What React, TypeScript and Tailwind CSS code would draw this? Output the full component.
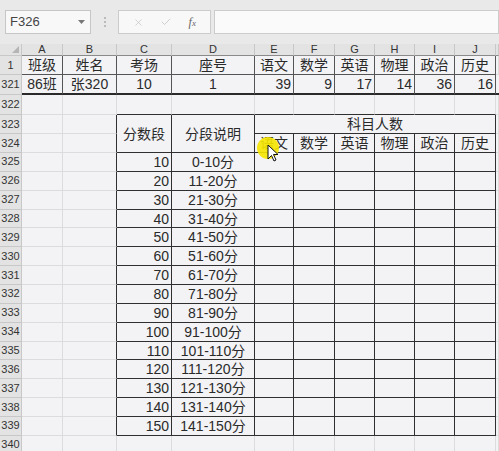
import { X, Check } from 'lucide-react'

const letters = ['A', 'B', 'C', 'D', 'E', 'F', 'G', 'H', 'I', 'J']
const heads = ['班级', '姓名', '考场', '座号', '语文', '数学', '英语', '物理', '政治', '历史']
const subjects = ['语文', '数学', '英语', '物理', '政治', '历史']
const scores = [39, 9, 17, 14, 36, 16]
const bands = Array.from({ length: 15 }, (_, i) => ({
  row: 325 + i,
  score: (i + 1) * 10,
  label: i === 0 ? '0-10分' : `${i * 10 + 1}-${(i + 1) * 10}分`,
}))

const GRID = 'border-r border-b border-[#dcdcdc]'
const TBL = 'border-r border-b border-[#2f2f2f]'
const EDGE = 'border-r border-b border-b-[#dcdcdc] border-r-[#2f2f2f]'
const TOP = 'border-r border-b border-r-[#dcdcdc] border-b-[#2f2f2f]'
const DATA = 'border-r border-b border-[#555]'
const FROZEN = 'border-r border-b-2 border-r-[#555] border-b-[#2a2a2a]'
const HDR = 'bg-[#e3e3e3] border-r border-b border-[#c8c8c8] text-[11px] text-[#333] justify-center'

function Cell({ className = '', children }: { className?: string; children?: React.ReactNode }) {
  return (
    <div className={`flex items-center overflow-hidden whitespace-nowrap ${className}`}>
      {children}
    </div>
  )
}

function RowHead({ n }: { n: number }) {
  return <Cell className={HDR}>{n}</Cell>
}

export default function App() {
  return (
    <div className="relative w-[499px] h-[451px] overflow-hidden bg-[#e9e9e9] text-[#2a2a2a] font-['Liberation_Sans','Noto_Sans_CJK_SC',sans-serif]">
      {/* Formula bar */}
      <div className="h-[44px] pt-[10px] pl-[5px] flex items-start">
        <div className="w-[86px] h-[24px] bg-[#f8f8f8] border border-[#c6c6c6] flex items-center justify-between pl-[4px] pr-[5px] text-[13px] text-[#444]">
          <span>F326</span>
          <svg width="7" height="4" viewBox="0 0 7 4">
            <path d="M0 0 L7 0 L3.5 4 Z" fill="#777" />
          </svg>
        </div>
        <div className="w-[27px] h-[24px] flex flex-col items-center justify-center gap-[2px]">
          <span className="w-[2px] h-[2px] bg-[#bbb]" />
          <span className="w-[2px] h-[2px] bg-[#bbb]" />
          <span className="w-[2px] h-[2px] bg-[#bbb]" />
        </div>
        <div className="w-[93px] h-[24px] bg-[#f8f8f8] border border-[#cccccc] flex items-center justify-around px-[6px]">
          <X size={11} strokeWidth={1.5} color="#c2c2c2" />
          <Check size={12} strokeWidth={1.5} color="#c2c2c2" />
          <span className="italic font-['Liberation_Serif',serif] text-[12px] text-[#666] leading-none">
            f<span className="text-[9px]">x</span>
          </span>
        </div>
        <div className="ml-[3px] flex-1 h-[24px] bg-[#fafafa] border border-[#cccccc]" />
      </div>

      {/* Sheet */}
      <div className="grid grid-cols-[22px_41px_54px_55px_83px_39px_41px_40px_40px_40px_41px_1fr] grid-rows-[12px_19px_20px_20px_19px_19px_repeat(15,18.87px)_19px] bg-[#f3f3f5] text-[14px] leading-none">
        {/* column headers */}
        <Cell className="bg-[#e3e3e3] border-r border-b border-[#c8c8c8] justify-end items-end pr-[2px] pb-[2px]">
          <svg width="7" height="7" viewBox="0 0 7 7">
            <path d="M7 0 L7 7 L0 7 Z" fill="#b5b5b5" />
          </svg>
        </Cell>
        {letters.map((l) => (
          <Cell key={l} className={`${HDR} border-b-[#8a8a8a]`}>
            {l}
          </Cell>
        ))}
        <Cell className={`${HDR} border-b-[#8a8a8a]`} />

        {/* row 1 */}
        <RowHead n={1} />
        {heads.map((h) => (
          <Cell key={h} className={`${DATA} justify-center`}>
            {h}
          </Cell>
        ))}
        <Cell className={GRID} />

        {/* row 321 */}
        <RowHead n={321} />
        <Cell className={`${FROZEN} justify-center`}>86班</Cell>
        <Cell className={`${FROZEN} justify-center`}>张320</Cell>
        <Cell className={`${FROZEN} justify-center`}>10</Cell>
        <Cell className={`${FROZEN} justify-center`}>1</Cell>
        {scores.map((s, i) => (
          <Cell key={i} className={`${FROZEN} justify-end pr-[2px]`}>
            {s}
          </Cell>
        ))}
        <Cell className="border-b-2 border-b-[#2a2a2a]" />

        {/* row 322 */}
        <RowHead n={322} />
        <Cell className={GRID} />
        <Cell className={GRID} />
        {letters.slice(2).map((l) => (
          <Cell key={l} className={TOP} />
        ))}
        <Cell className={GRID} />

        {/* row 323 */}
        <RowHead n={323} />
        <Cell className={GRID} />
        <Cell className={EDGE} />
        <Cell className={`${TBL} row-span-2 justify-center`}>分数段</Cell>
        <Cell className={`${TBL} row-span-2 justify-center`}>分段说明</Cell>
        <Cell className={`${TBL} col-span-6 justify-center`}>科目人数</Cell>
        <Cell className={GRID} />

        {/* row 324 */}
        <RowHead n={324} />
        <Cell className={GRID} />
        <Cell className={EDGE} />
        {subjects.map((s) => (
          <Cell key={s} className={`${TBL} justify-center`}>
            {s}
          </Cell>
        ))}
        <Cell className={GRID} />

        {/* rows 325-339 */}
        {bands.map((b) => (
          <div key={b.row} className="contents">
            <RowHead n={b.row} />
            <Cell className={GRID} />
            <Cell className={EDGE} />
            <Cell className={`${TBL} justify-end pr-[2px]`}>{b.score}</Cell>
            <Cell className={`${TBL} justify-center`}>{b.label}</Cell>
            {subjects.map((s) => (
              <Cell key={s} className={TBL} />
            ))}
            <Cell className={GRID} />
          </div>
        ))}

        {/* row 340 */}
        <RowHead n={340} />
        {letters.map((l) => (
          <Cell key={l} className={GRID} />
        ))}
        <Cell className={GRID} />
      </div>

      {/* pointer highlight */}
      <div className="absolute left-[257px] top-[137px] w-[22px] h-[22px] rounded-full bg-[#f6e500]/90" />
      <svg className="absolute left-[267px] top-[144px]" width="12" height="19" viewBox="0 0 12 19">
        <path
          d="M1 1 L1 15 L4.5 11.5 L7 17 L9 16 L6.5 10.5 L11 10.5 Z"
          fill="#fff"
          stroke="#111"
          strokeWidth="1"
          strokeLinejoin="round"
        />
      </svg>
    </div>
  )
}
